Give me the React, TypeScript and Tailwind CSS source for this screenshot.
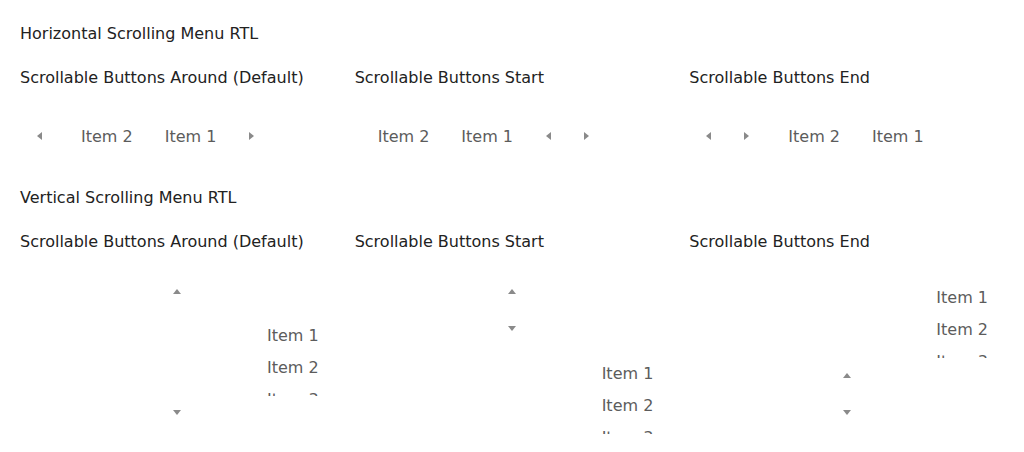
import React from "react";

const ARROW = "#8a8a8a";

function Tri({ dir }: { dir: "left" | "right" | "up" | "down" }) {
  if (dir === "left" || dir === "right") {
    return (
      <svg width="5" height="8" viewBox="0 0 5 8">
        <polygon points={dir === "left" ? "5,0 0,4 5,8" : "0,0 5,4 0,8"} fill={ARROW} />
      </svg>
    );
  }
  return (
    <svg width="8" height="5" viewBox="0 0 8 5">
      <polygon points={dir === "up" ? "0,5 4,0 8,5" : "0,0 4,5 8,0"} fill={ARROW} />
    </svg>
  );
}

function HArrow({ dir }: { dir: "left" | "right" }) {
  return (
    <div className="w-[38px] h-[38px] flex items-center justify-center shrink-0">
      <Tri dir={dir} />
    </div>
  );
}

function HItems() {
  return (
    <div className="flex pl-[7px] pt-[2px] h-[38px] items-center text-[#5c5c5c]">
      <div className="px-4">Item 2</div>
      <div className="px-4">Item 1</div>
    </div>
  );
}

function VArrow({ dir }: { dir: "up" | "down" }) {
  return (
    <div className="h-[37px] pt-2 flex justify-center">
      <div className="h-[5px] flex">
        <Tri dir={dir} />
      </div>
    </div>
  );
}

function VList({ pad }: { pad: string }) {
  return (
    <div className={`h-[84px] ${pad}`}>
      <div className="h-[76px] overflow-hidden text-[#5c5c5c]">
        {["Item 1", "Item 2", "Item 3"].map((t) => (
          <div key={t} className="h-8 flex items-center justify-end pr-4">
            {t}
          </div>
        ))}
      </div>
    </div>
  );
}

export default function App() {
  return (
    <div className="px-5 pt-[21px] font-['DejaVu_Sans',sans-serif] text-[16px] leading-[26px] text-[#222] bg-white min-h-[452px]">
      <div>Horizontal Scrolling Menu RTL</div>
      <div className="grid grid-cols-3 gap-x-5 mt-[18px]">
        <div>
          <div>Scrollable Buttons Around (Default)</div>
          <div className="mt-[26px] flex">
            <HArrow dir="left" />
            <HItems />
            <HArrow dir="right" />
          </div>
        </div>
        <div>
          <div>Scrollable Buttons Start</div>
          <div className="mt-[26px] flex">
            <HItems />
            <HArrow dir="left" />
            <HArrow dir="right" />
          </div>
        </div>
        <div>
          <div>Scrollable Buttons End</div>
          <div className="mt-[26px] flex">
            <HArrow dir="left" />
            <HArrow dir="right" />
            <HItems />
          </div>
        </div>
      </div>

      <div className="mt-[30px]">Vertical Scrolling Menu RTL</div>
      <div className="grid grid-cols-3 gap-x-5 mt-[18px]">
        <div>
          <div>Scrollable Buttons Around (Default)</div>
          <div className="mt-[26px] flex flex-col">
            <VArrow dir="up" />
            <VList pad="pt-[2px]" />
            <VArrow dir="down" />
          </div>
        </div>
        <div>
          <div>Scrollable Buttons Start</div>
          <div className="mt-[26px] flex flex-col">
            <VArrow dir="up" />
            <VArrow dir="down" />
            <VList pad="pt-[3px]" />
          </div>
        </div>
        <div>
          <div>Scrollable Buttons End</div>
          <div className="mt-[26px] flex flex-col">
            <VList pad="pt-[1px]" />
            <VArrow dir="up" />
            <VArrow dir="down" />
          </div>
        </div>
      </div>
    </div>
  );
}
